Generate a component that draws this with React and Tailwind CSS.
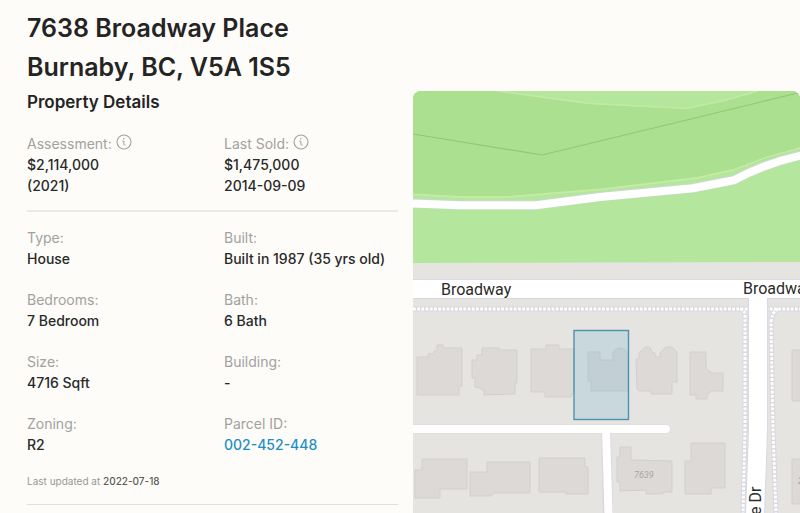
const summary = [
  { label: 'Assessment:', info: true, value: ['$2,114,000', '(2021)'] },
  { label: 'Last Sold:', info: true, value: ['$1,475,000', '2014-09-09'] },
]

const details = [
  { label: 'Type:', value: ['House'] },
  { label: 'Built:', value: ['Built in 1987 (35 yrs old)'] },
  { label: 'Bedrooms:', value: ['7 Bedroom'] },
  { label: 'Bath:', value: ['6 Bath'] },
  { label: 'Size:', value: ['4716 Sqft'] },
  { label: 'Building:', value: ['-'] },
  { label: 'Zoning:', value: ['R2'] },
  { label: 'Parcel ID:', value: ['002-452-448'], href: '#parcel' },
]

const buildings = [
  'M417 357H428V354H434V351H437V345H443V348H462V386H459V395H417Z',
  'M472 360H477V355H482V348H499V350H517V383H515V394L484 395V391L480 388L475 387V378H472Z',
  'M531 349H546V345H559V349H574V391L571 397H545V392H531Z',
  'M588 352H600V360H613V352Q619 345 625 350L628 354V391H591V381H588Z',
  'M636 359H639V353L645 347H650L652 352L655 353V357H660V353L666 347H672L677 352V382H672V394H651V391H639L637 389Z',
  'M690 352H706V369L712 373H723V391L712 391L707 395V399H696V395H690Z',
  'M792 350H802V401H792Z',
  'M422 459H467V489H440V498H415V470H422Z',
  'M487 462H530V493H494L491 496H470V472H487Z',
  'M539 458H585V467H588V494H566V492H539Z',
  'M620 447H631V460L672 461V492H663V494H646V490L620 491V482H617V457H620Z',
  'M691 443H725V488H711V494H685V461H691Z',
  'M792 459H802V504H792Z',
]

const footpaths = [
  'M413 309H749',
  'M740 309Q745 310 745 316V430L743 513',
  'M802 309H767',
  'M778 309Q772 312 771 322L773 430L776 513',
]

function InfoIcon() {
  return (
    <svg viewBox="0 0 16 16" className="-mt-1 h-4 w-4" fill="none" stroke="currentColor" aria-hidden="true">
      <circle cx="8" cy="8" r="7" strokeWidth="1.1" />
      <circle cx="7.800" cy="4.800" r="0.800" fill="currentColor" stroke="none" />
      <path d="M6.600 7.200H7.900V10.400Q7.900 11.300 9.300 11.200" strokeWidth="1" strokeLinecap="round" />
    </svg>
  )
}

function Field({ label, value, info, href }) {
  return (
    <div>
      <dt className="flex items-center gap-1 leading-5 text-[#a3a19f]">
        {label}
        {info && <InfoIcon />}
      </dt>
      {value.map((line) => (
        <dd key={line} className="leading-[21px] font-medium text-[#292929]">
          {href ? (
            <a href={href} className="text-[#1d8fc4]">
              {line}
            </a>
          ) : (
            line
          )}
        </dd>
      ))}
    </div>
  )
}

function PropertyMap() {
  return (
    <svg
      viewBox="413 91 387 422"
      preserveAspectRatio="xMinYMin slice"
      role="img"
      aria-label="Map"
      className="h-full w-full rounded-t-lg bg-[#e5e4e0]"
    >
      {/* park */}
      <path d="M413 91H800V262L413 263Z" fill="#b5e69e" />
      <path
        d="M413 91H499L550 99L590 104L640 106L687 108.500L722 101L758 91H800V149L733 170L697 178L605 189L540 194L508 197H470L413 194Z"
        fill="#aae08f"
      />
      <path d="M497 91L550 98L590 103.500L640 106L687 108.500L722 101L758 91" fill="none" stroke="#c3eaa5" strokeWidth="1.500" />
      <path d="M413 134L542 155L600 141L798 93" fill="none" stroke="#8eca73" strokeWidth="1.200" />
      <path d="M413 194.500L460 197H508L600 189.500L697 178L733 170L765 158L800 148" fill="none" stroke="#c3eba4" strokeWidth="1.800" />
      <g fill="none">
        <path d="M413 203L460 205H536L600 196.600L693 188L734 180Q765 163 802 155" stroke="#c9d9cd" strokeWidth="9.500" />
        <path d="M413 203.500L460 205.200H536L600 197L693 188.300L734 180.300Q765 163.300 802 155.300" stroke="#fff" strokeWidth="8" />
      </g>

      {/* footpaths */}
      <g fill="none">
        {footpaths.map((d) => (
          <path key={d} d={d} stroke="#d9d8e2" strokeWidth="5" />
        ))}
        {footpaths.map((d) => (
          <path key={d} d={d} stroke="#fff" strokeWidth="3" strokeDasharray="2.800 1.400" />
        ))}
      </g>

      {/* streets */}
      <g fill="none" stroke="#d9d8e2">
        <path d="M413 289H802" strokeWidth="20" />
        <path d="M758 295V430L755 515" strokeWidth="20" />
        <path d="M413 429H666" strokeWidth="9" strokeLinecap="round" />
        <path d="M606 429L608 515" strokeWidth="10" />
      </g>
      <g fill="none" stroke="#fff">
        <path d="M413 289H802" strokeWidth="18" />
        <path d="M758 290V430L755 515" strokeWidth="18" />
        <path d="M413 429H666" strokeWidth="8" strokeLinecap="round" />
        <path d="M606 429L608.500 515" strokeWidth="8" />
      </g>

      {buildings.map((d) => (
        <path key={d} d={d} fill="#dcd9d6" stroke="#d2cfcc" strokeWidth="1" />
      ))}

      {/* selected parcel */}
      <rect x="574" y="330.500" width="54.500" height="89" fill="#59a9cf" fillOpacity="0.200" stroke="#4c93b3" strokeWidth="1.400" />

      <g fill="#2b2b2b" fontFamily="Roboto, sans-serif" fontSize="16">
        <text x="441" y="295">Broadway</text>
        <text x="743" y="294">Broadway</text>
        <text transform="translate(761 515) rotate(-90)">e Dr</text>
        <text x="634" y="478" fontSize="9" fontStyle="italic" fill="#a9a6a4">7639</text>
        <text x="798" y="484" fontSize="9" fontStyle="italic" fill="#a9a6a4">2</text>
      </g>
    </svg>
  )
}

export default function App() {
  return (
    <main className="flex h-screen overflow-hidden bg-[#fdfcf9] pl-[27px] font-['Inter',sans-serif] text-sm text-[#242424]">
      <section className="mr-[15px] flex-[371]">
        <h1 className="pt-[9px] text-[25px] leading-[39px] font-semibold">
          7638 Broadway Place
          <br />
          Burnaby, BC, V5A 1S5
        </h1>
        <h2 className="pt-[3px] text-[17px] leading-6 font-semibold">Property Details</h2>

        <dl className="mt-5 grid grid-cols-[197px_1fr] border-b-2 border-[#ebeae7] pb-3.5">
          {summary.map((item) => (
            <Field key={item.label} {...item} />
          ))}
        </dl>

        <dl className="mt-4 grid grid-cols-[197px_1fr] gap-y-[21px]">
          {details.map((item) => (
            <Field key={item.label} {...item} />
          ))}
        </dl>

        <p className="mt-[18px] border-b border-[#e0dfdc] pb-[15px] text-[10px] leading-4 text-[#9a9896]">
          Last updated at{' '}
          <time dateTime="2022-07-18" className="font-medium text-[#5e5d5b]">
            2022-07-18
          </time>
        </p>
      </section>

      <section className="flex-[387] pt-[91px]">
        <PropertyMap />
      </section>
    </main>
  )
}
